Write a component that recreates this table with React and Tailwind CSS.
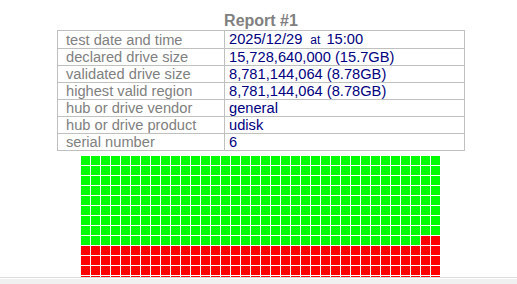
const rows = [
  ['test date and time', 'date'],
  ['declared drive size', '15,728,640,000 (15.7GB)'],
  ['validated drive size', '8,781,144,064 (8.78GB)'],
  ['highest valid region', '8,781,144,064 (8.78GB)'],
  ['hub or drive vendor', 'general'],
  ['hub or drive product', 'udisk'],
  ['serial number', '6'],
]

const COLS = 36
const TOTAL_ROWS = 13
const GOOD = 8 * COLS + 34

const cells = Array.from({ length: COLS * TOTAL_ROWS }, (_, i) => i < GOOD)

export default function App() {
  return (
    <div className="h-[284px] w-[517px] bg-white flex flex-col overflow-hidden font-['Liberation_Sans',Arial,sans-serif]">
      <div className="flex-1 overflow-hidden pl-[5px] pt-[12px] flex flex-col items-center">
        <h1 className="text-[16px] leading-[18px] font-bold text-[#808080]">Report #1</h1>

        <table className="w-[408px] border-collapse border border-[#c0c0c0] text-[14.67px] leading-[16px]">
          <tbody>
            {rows.map(([label, value]) => (
              <tr key={label}>
                <td className="w-[167px] border border-[#c0c0c0] pl-[8px] pr-1 text-[#808080]">{label}</td>
                <td className="border border-[#c0c0c0] px-[4px] text-[#000080]">
                  {value === 'date' ? (
                    <>
                      2025/12/29
                      <span className="text-[12px] pl-[8px] pr-[6px]">at</span>
                      15:00
                    </>
                  ) : (
                    value
                  )}
                </td>
              </tr>
            ))}
          </tbody>
        </table>

        <div className="mt-[5px] w-[360px] grid grid-cols-[repeat(36,10px)]">
          {cells.map((ok, i) => (
            <div key={i} className="h-[10px] w-[10px] pr-px pb-px">
              <div className={ok ? 'h-[9px] w-[9px] bg-[#00ff00]' : 'h-[9px] w-[9px] bg-[#ff0000]'} />
            </div>
          ))}
        </div>
      </div>

      {/* bottom bar */}
      <div className="h-[7px] border-t border-[#dcdcdc] bg-white">
        <div className="mt-px h-[6px] bg-[#f0f0f0]" />
      </div>
    </div>
  )
}
